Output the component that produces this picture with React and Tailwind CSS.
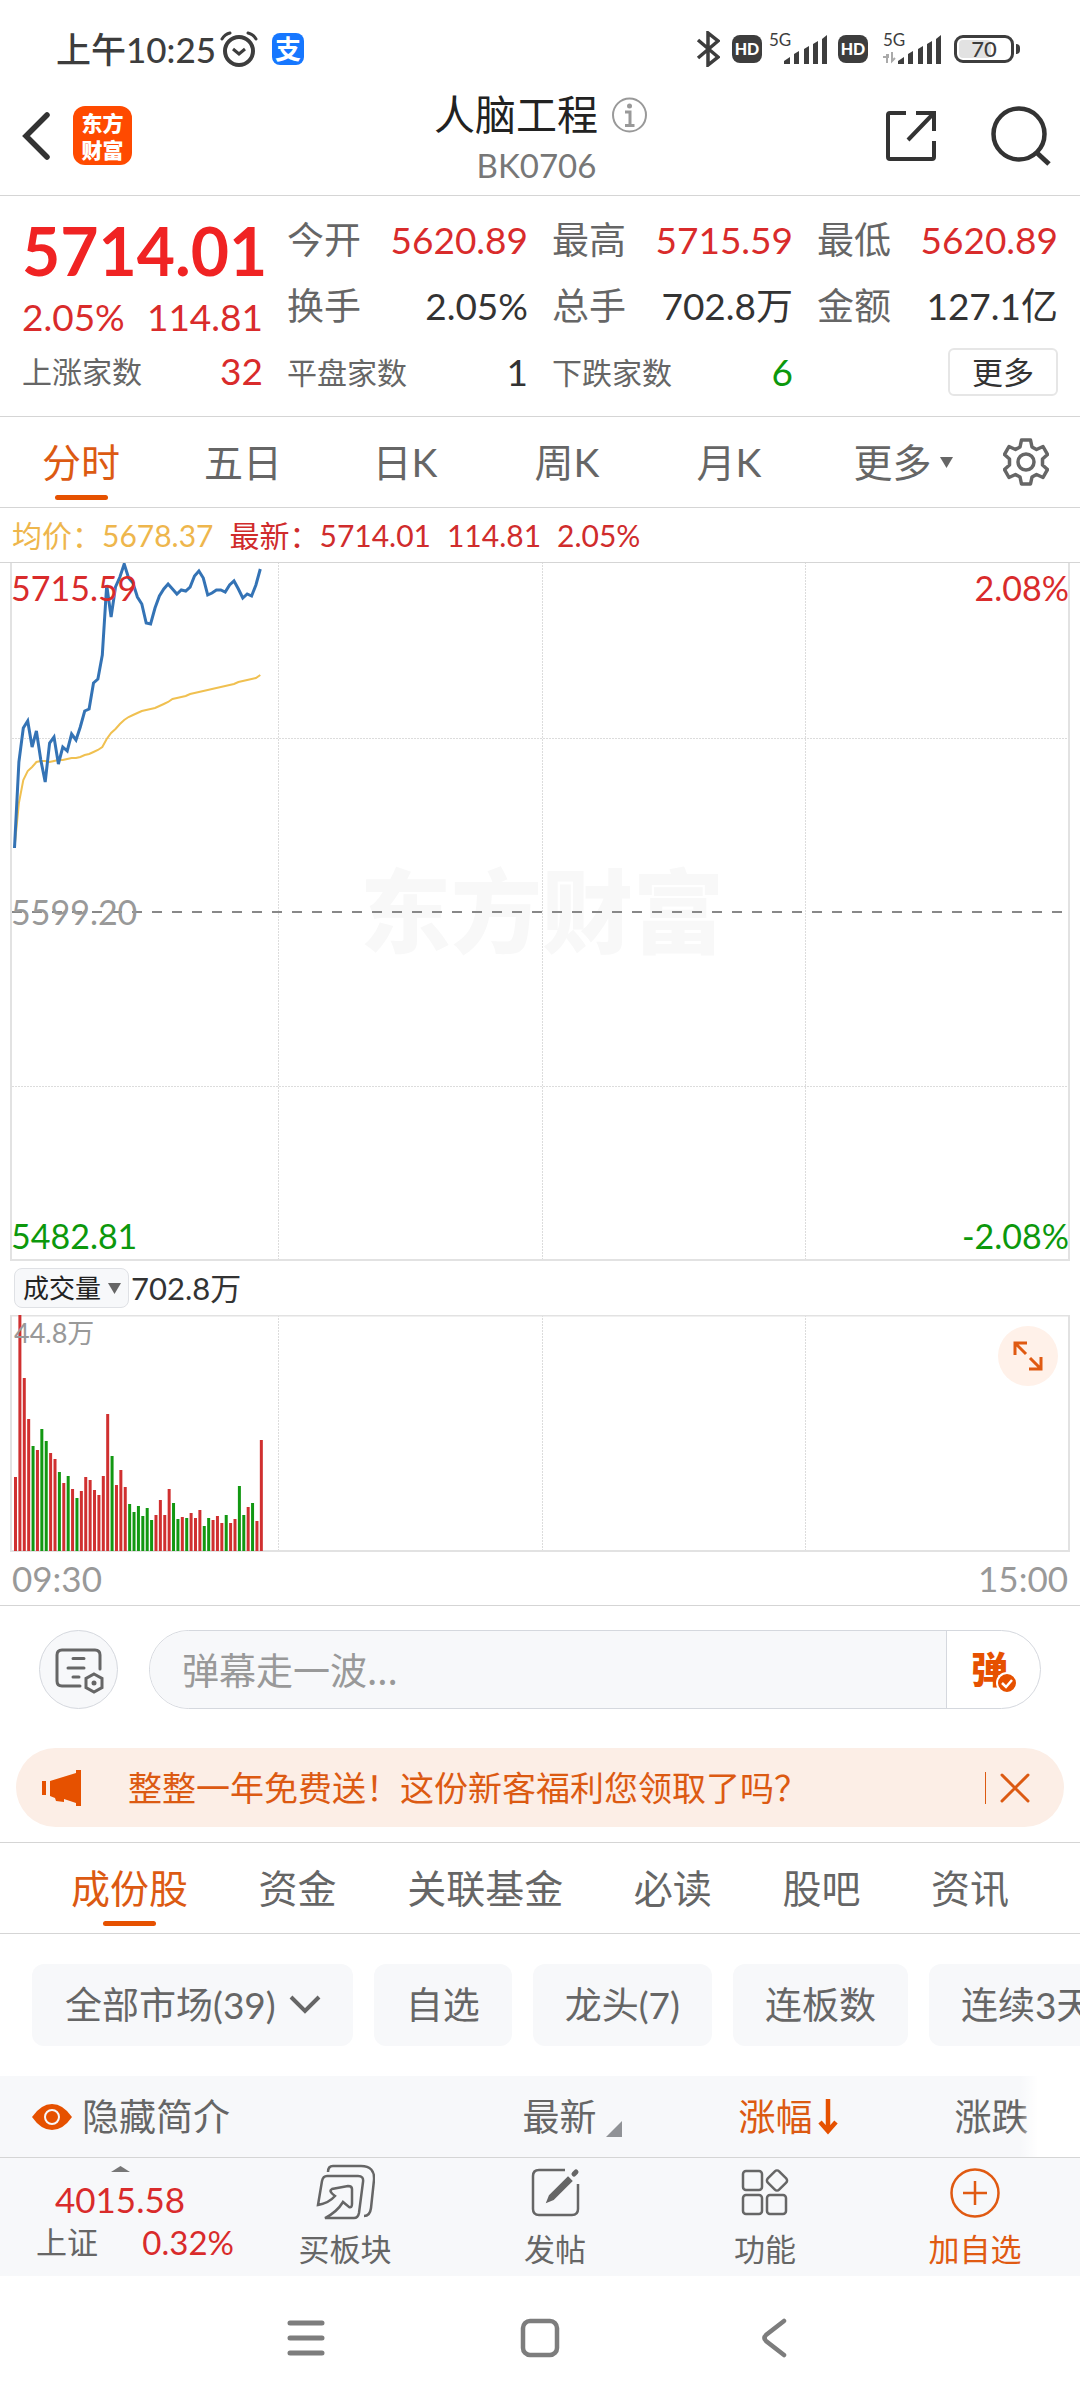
import { useState } from 'react';
import clsx from 'clsx';

const STEP = 4.39;

const prices = [
  286, 200, 166, 159, 185, 169, 198, 220, 181, 175, 202, 185, 189, 172, 178, 165, 149, 147, 121,
  117, 93, 23, 55, 25, 15, 2, 16, 21, 35, 42, 61, 62, 46, 34, 27, 22, 27, 32, 28, 29, 25, 14, 9,
  16, 33, 31, 28, 28, 30, 23, 19, 27, 36, 32, 34, 23, 7,
];

const averages = [
  286, 241, 218, 209, 205, 200, 199, 199, 200, 199, 198, 198, 197, 196, 196, 195, 193, 192, 190,
  188, 185, 177, 171, 167, 162, 158, 155, 153, 151, 149, 148, 147, 146, 144, 142, 140, 137, 136,
  135, 134, 132, 131, 130, 129, 128, 127, 126, 125, 124, 123, 122, 120, 119, 118, 117, 116, 113,
];

const volumes = [
  74, 236, 173, 132, 105, 101, 122, 110, 98, 92, 79, 68, 75, 62, 53, 60, 74, 71, 61, 56, 75, 137,
  95, 66, 81, 64, 47, 39, 45, 35, 43, 31, 36, 51, 36, 62, 48, 32, 34, 33, 38, 33, 41, 25, 33, 31,
  35, 28, 36, 28, 32, 65, 36, 44, 48, 30, 111,
];

// minutes that closed lower than the one before
const falling = [4, 6, 7, 10, 12, 14, 22, 26, 27, 28, 29, 30, 31, 36, 37, 39, 43, 44, 48, 51, 52, 54];

const quoteColumns = [
  [
    { label: '今开', value: '5620.89', color: 'text-[#d92b2b]' },
    { label: '换手', value: '2.05%', color: 'text-[#333]' },
    { label: '平盘家数', value: '1', color: 'text-[#333]', small: true },
  ],
  [
    { label: '最高', value: '5715.59', color: 'text-[#d92b2b]' },
    { label: '总手', value: '702.8万', color: 'text-[#333]' },
    { label: '下跌家数', value: '6', color: 'text-[#0c980c]', small: true },
  ],
  [
    { label: '最低', value: '5620.89', color: 'text-[#d92b2b]' },
    { label: '金额', value: '127.1亿', color: 'text-[#333]' },
  ],
];

const toPoints = (list) => list.map((y, i) => `${(4.5 + i * STEP).toFixed(1)},${y}`).join(' ');

const Signal = ({ data }) => (
  <svg width="60" height="42" viewBox="0 -4 60 42" className="text-[#3d3d3d]">
    <text x="1" y="14" fontSize="17" fontFamily="Lato" fill="currentColor">5G</text>
    {data && <path d="M1 25h5v-3M5 22v9M10 20v9l3-3" fill="none" stroke="#aaa" strokeWidth="2" />}
    <path
      d="M16 32v-3l6-4v7zM26 32V22l5-3v13zM36 32V17l5-3v18zM45 32V12l5-3v23zM54 32V7l5-4v29z"
      fill="currentColor"
    />
  </svg>
);

const HdBadge = () => (
  <span className="flex h-7 w-[30px] items-center justify-center rounded-lg bg-[#3d3d3d] text-[16px] leading-none font-black text-white">
    HD
  </span>
);

const StatusBar = () => (
  <div className="flex h-[76px] items-center justify-between pt-[22px] pr-[60px] pl-14 text-[#3d3d3d]">
    <div className="flex items-center">
      <span className="text-[35px] leading-10 font-medium">上午10:25</span>
      <svg width="38" height="38" viewBox="0 0 38 38" fill="none" stroke="currentColor" strokeWidth="4" className="ml-1">
        <circle cx="19" cy="21" r="14" />
        <path d="M13 19l6 5 6-5" strokeWidth="3" />
        <path d="M2 9q3-5 8-6M36 9q-3-5-8-6" strokeLinecap="round" strokeWidth="3" />
      </svg>
      <span className="ml-[14px] flex size-8 items-center justify-center rounded-lg bg-[#1677ff] text-[26px] leading-none font-bold text-white">
        支
      </span>
    </div>
    <div className="flex items-center">
      <svg width="24" height="36" viewBox="0 0 24 36" fill="none" stroke="currentColor" strokeWidth="3.5" className="mr-3">
        <path d="M2 9l20 17-10 8V2l10 8L2 27" />
      </svg>
      <HdBadge />
      <div className="mr-[10px] ml-[6px]"><Signal /></div>
      <HdBadge />
      <div className="mr-3 ml-[14px]"><Signal data /></div>
      <div className="relative flex h-7 w-[60px] items-center justify-center rounded-[9px] border-[3px] border-[#3d3d3d]">
        <span className="absolute inset-y-[2px] left-[2px] w-8 rounded-[4px] bg-[#e2e2e2]" />
        <span className="relative text-[22px] leading-none font-medium">70</span>
      </div>
      <span className="ml-[2px] h-[10px] w-1 rounded-r bg-[#3d3d3d]" />
    </div>
  </div>
);

const Header = () => (
  <header className="flex h-[120px] items-center border-b border-[#d5d5d5] pr-[29px] pl-[22px]">
    <div className="flex flex-1 items-center gap-[23px]">
      <button aria-label="返回">
        <svg width="28" height="48" viewBox="0 0 28 48" fill="none" stroke="#333" strokeWidth="5.5" strokeLinecap="round">
          <path d="M25 3L4 24l21 21" />
        </svg>
      </button>
      <a
        href="#home"
        className="flex h-[59px] w-[59px] flex-col items-center justify-center rounded-xl bg-[#ff4a00] font-['Noto_Sans_CJK_SC',sans-serif] text-[21px] leading-[27px] font-black text-white"
      >
        <span>东方</span>
        <span>财富</span>
      </a>
    </div>
    <div className="flex flex-col items-center pt-2">
      <h1 className="flex items-center gap-[14px] pl-2 text-[41px] leading-[50px] text-[#222]">
        人脑工程
        <svg width="35" height="36" viewBox="0 0 35 36" fill="none" stroke="#999" strokeWidth="2">
          <circle cx="17.5" cy="18" r="16.5" />
          <circle cx="17.5" cy="9" r="2.5" fill="#999" stroke="none" />
          <path d="M13 15h5v13M13 28.500h9.500" strokeWidth="3" />
        </svg>
      </h1>
      <p className="text-[33px] leading-[50px] text-[#777]">BK0706</p>
    </div>
    <div className="flex flex-1 items-center justify-end gap-[54px] text-[#333]">
      <button aria-label="分享">
        <svg width="52" height="52" viewBox="0 0 52 52" fill="none" stroke="currentColor" strokeWidth="4">
          <path d="M21 3H5q-2 0-2 2v42q0 2 2 2h42q2 0 2-2V31M31 3h18v18M48 4L23 30" />
        </svg>
      </button>
      <button aria-label="搜索">
        <svg width="60" height="60" viewBox="0 0 60 60" fill="none" stroke="currentColor" strokeWidth="4.500">
          <circle cx="28" cy="28" r="25.500" />
          <path d="M45 46l13 12" strokeWidth="5" />
        </svg>
      </button>
    </div>
  </header>
);

const QuotePanel = () => (
  <section className="grid grid-cols-4 gap-x-6 border-b border-[#d5d5d5] px-[22px] pb-[11px]">
    <div className="pt-[22px] text-[#d92b2b]">
      <p className="text-[66px] leading-[66px] font-bold text-[#f02323]">5714.01</p>
      <p className="flex justify-between text-[37px] leading-[66px]">
        <span>2.05%</span>
        <span>114.81</span>
      </p>
      <p className="flex items-center justify-between leading-[42px]">
        <span className="text-[30px] text-[#666]">上涨家数</span>
        <span className="text-[37px]">32</span>
      </p>
    </div>
    {quoteColumns.map((rows) => (
      <div key={rows[0].label} className="pt-[11px]">
        {rows.map((row) => (
          <p key={row.label} className="flex items-center justify-between leading-[66px] whitespace-nowrap">
            <span className={clsx('text-[#666]', row.small ? 'text-[30px]' : 'text-[37px]')}>{row.label}</span>
            <span className={clsx('text-[37px]', row.color)}>{row.value}</span>
          </p>
        ))}
        {rows.length === 2 && (
          <div className="flex h-[66px] items-center justify-end">
            <button className="rounded-md border-2 border-[#e6e6e6] px-[22px] text-[31px] leading-[44px] text-[#333]">更多</button>
          </div>
        )}
      </div>
    ))}
  </section>
);

const PeriodTabs = () => {
  const [active, setActive] = useState('分时');
  return (
    <nav className="flex border-b border-[#d5d5d5]">
      <div className="grid flex-1 grid-cols-6">
        {['分时', '五日', '日K', '周K', '月K', '更多'].map((tab) => (
          <button
            key={tab}
            onClick={() => setActive(tab)}
            className={clsx(
              'relative flex h-[90px] items-center justify-center gap-2 text-[39px] leading-[48px]',
              active === tab ? 'text-[#dc5a12]' : 'text-[#666]',
              tab === '更多' && 'pl-6',
            )}
          >
            {tab}
            {tab === '更多' && (
              <svg width="13" height="11" viewBox="0 0 13 11" fill="currentColor"><path d="M0 0h13L6.500 11z" /></svg>
            )}
            {active === tab && <span className="absolute bottom-[7px] h-[5px] w-[53px] rounded-full bg-[#e65100]" />}
          </button>
        ))}
      </div>
      <button aria-label="设置" className="flex w-[108px] items-center justify-center text-[#666]">
        <svg width="46" height="48" viewBox="0 0 46 48" fill="none" stroke="currentColor" strokeWidth="3.500" strokeLinejoin="round">
          <path d="M18.500 2h9l1.500 7 4.500 2.500 6.500-3 4.500 8-5 4.500v6l5 4.500-4.500 8-6.500-3-4.500 2.500-1.500 7h-9l-1.500-7-4.500-2.500-6.500 3-4.500-8 5-4.500v-6l-5-4.500 4.500-8 6.500 3 4.500-2.500z" />
          <circle cx="23" cy="24" r="8" />
        </svg>
      </button>
    </nav>
  );
};

const PriceChart = () => (
  <div className="relative mx-[10px]">
    <svg viewBox="0 1 1060 698" className="block w-full">
      <text x="532" y="384" textAnchor="middle" fontSize="91" fontWeight="900" fontFamily="Noto Sans CJK SC" fill="#f8f8f8">
        东方财富
      </text>
      <g stroke="#dcdcdc" strokeDasharray="2 1">
        <path d="M268.500 0v698M532.500 0v698M795.500 0v698M2 176.500h1056M2 524.500h1056" />
      </g>
      <path d="M1 0v698h1058V0" fill="none" stroke="#e2e2e2" strokeWidth="2" />
      <path d="M2 350h1056" stroke="#888" strokeWidth="2" strokeDasharray="10 10" />
      <polyline points={toPoints(averages)} fill="none" stroke="#f0c050" strokeWidth="2" />
      <polyline points={toPoints(prices)} fill="none" stroke="#3473b5" strokeWidth="3" />
    </svg>
    <div className="absolute inset-0 flex flex-col justify-between px-[1px] text-[34px] leading-[50px]">
      <p className="flex justify-between text-[#d92b2b]"><span>5715.59</span><span>2.08%</span></p>
      <p className="text-[#999]">5599.20</p>
      <p className="flex justify-between text-[#0c980c]"><span>5482.81</span><span>-2.08%</span></p>
    </div>
  </div>
);

const VolumeChart = () => (
  <div className="relative mx-[10px]">
    <svg viewBox="0 0 1060 237" className="block w-full">
      <g stroke="#dcdcdc" strokeDasharray="2 1">
        <path d="M268.500 0v236M532.500 0v236M795.500 0v236" />
      </g>
      <path d="M1 .5h1058V236H1z" fill="none" stroke="#e2e2e2" strokeWidth="2" />
      {volumes.map((v, i) => (
        <rect key={i} x={4 + i * STEP} y={236 - v} width="3" height={v} fill={falling.includes(i) ? '#129812' : '#d03030'} />
      ))}
    </svg>
    <span className="absolute top-0 left-1 text-[27px] leading-9 text-[#999]">44.8万</span>
    <button aria-label="全屏" className="absolute top-[11px] right-3 flex size-[60px] items-center justify-center rounded-full bg-[#fff1e9]">
      <svg width="30" height="30" viewBox="0 0 30 30" fill="none" stroke="#e05a12" strokeWidth="3">
        <path d="M2 14V2h12M2 2l11 11M28 16v12H16M28 28L17 17" />
      </svg>
    </button>
  </div>
);

const Minutes = () => (
  <section className="border-b border-[#d5d5d5]">
    <p className="flex h-[55px] items-center gap-4 border-b border-[#d5d5d5] px-3 text-[30px] text-[#d02c2c]">
      <span className="text-[#eeb64c]">均价：5678.37</span>
      <span>最新：5714.01</span>
      <span>114.81</span>
      <span>2.05%</span>
    </p>
    <PriceChart />
    <div className="flex h-[54px] items-center gap-[2px] pl-[14px]">
      <div className="relative flex items-center">
        <select
          aria-label="指标"
          className="field-sizing-content h-10 appearance-none rounded-lg border border-[#dfe1e5] bg-[#f7f8fa] pr-[27px] pl-2 text-[26px] text-[#222]"
        >
          <option>成交量</option>
        </select>
        <svg width="13" height="11" viewBox="0 0 13 11" fill="#666" className="pointer-events-none absolute right-2">
          <path d="M0 0h13L6.500 11z" />
        </svg>
      </div>
      <span className="text-[31px] leading-10 text-[#333]">702.8万</span>
    </div>
    <VolumeChart />
    <div className="flex h-[53px] items-center justify-between px-3 text-[35px] text-[#999]">
      <span>09:30</span>
      <span>15:00</span>
    </div>
  </section>
);

const Barrage = () => (
  <section className="border-b border-[#d5d5d5] pt-6 pb-[15px]">
    <div className="flex gap-[31px] px-[39px]">
      <button aria-label="弹幕设置" className="flex size-[79px] items-center justify-center rounded-full border border-[#d5d8de] bg-[#f7f8fa]">
        <svg width="50" height="48" viewBox="0 0 50 48" fill="none" stroke="#666" strokeWidth="3" strokeLinecap="round">
          <path d="M46 23V9q0-5-5-5H8Q3 4 3 9v26q0 5 5 5h18" />
          <path d="M19 12.500h11M14 22h16M19 31h6" />
          <path d="M40 28l8 4.500v9L40 46l-8-4.500v-9z" />
          <circle cx="40" cy="37" r="2.500" fill="#666" stroke="none" />
        </svg>
      </button>
      <div className="flex h-[79px] flex-1 overflow-hidden rounded-full border border-[#d5d8de]">
        <input
          aria-label="弹幕"
          placeholder="弹幕走一波..."
          className="min-w-0 flex-1 bg-[#f7f8fa] px-8 font-['Noto_Sans_CJK_SC',sans-serif] text-[37px] placeholder:text-[#999]"
        />
        <button aria-label="弹幕开关" className="relative w-[94px] border-l border-[#d5d8de] pr-2 text-[37px] font-black text-[#e65100]">
          弹
          <svg width="22" height="22" viewBox="0 0 22 22" className="absolute right-[22px] bottom-[14px]">
            <circle cx="11" cy="11" r="10" fill="#e65100" stroke="#fff" strokeWidth="2" />
            <path d="M6 11l4 4 6-7" fill="none" stroke="#fff" strokeWidth="2.500" />
          </svg>
        </button>
      </div>
    </div>
    <div className="mx-4 mt-[39px] flex h-[79px] items-center rounded-full bg-[#fceee6] pr-[34px] pl-[26px] text-[#dc5a12]">
      <svg width="40" height="36" viewBox="0 0 40 36" fill="#e65100">
        <path d="M0 11h4v14H0zM8 11L34 3V0h5v36h-5v-3l-12-4v3l-8-1-1-3-5-2z" />
      </svg>
      <p className="ml-[46px] flex-1 text-[34px] leading-[44px]">整整一年免费送！这份新客福利您领取了吗？</p>
      <span className="mr-[14px] h-8 w-px bg-[#dc5a12]" />
      <button aria-label="关闭">
        <svg width="30" height="30" viewBox="0 0 30 30" fill="none" stroke="currentColor" strokeWidth="3" strokeLinecap="round">
          <path d="M2 2l26 26M28 2L2 28" />
        </svg>
      </button>
    </div>
  </section>
);

const DetailTabs = () => {
  const [active, setActive] = useState('成份股');
  return (
    <nav className="flex justify-between border-b border-[#d5d5d5] px-[71px]">
      {['成份股', '资金', '关联基金', '必读', '股吧', '资讯'].map((tab) => (
        <button
          key={tab}
          onClick={() => setActive(tab)}
          className={clsx(
            'relative flex h-[90px] items-center justify-center text-[39px] leading-[48px]',
            active === tab ? 'text-[#dc5a12]' : 'text-[#666]',
          )}
        >
          {tab}
          {active === tab && <span className="absolute bottom-[7px] h-[5px] w-[53px] rounded-full bg-[#e65100]" />}
        </button>
      ))}
    </nav>
  );
};

const Filters = () => (
  <div className="flex gap-[21px] overflow-hidden py-[30px] pl-8 text-[37px] whitespace-nowrap text-[#666]">
    <div className="relative flex shrink-0 items-center">
      <select aria-label="市场" className="field-sizing-content h-[82px] appearance-none rounded-xl bg-[#f7f8fa] pr-[77px] pl-[33px]">
        <option>全部市场(39)</option>
      </select>
      <svg width="32" height="20" viewBox="0 0 32 20" fill="none" stroke="currentColor" strokeWidth="4" className="pointer-events-none absolute right-8">
        <path d="M2 2l14 14L30 2" />
      </svg>
    </div>
    {['自选', '龙头(7)', '连板数', '连续3天上涨'].map((name) => (
      <button key={name} className="h-[82px] shrink-0 rounded-xl bg-[#f7f8fa] px-8">{name}</button>
    ))}
  </div>
);

const SortMark = () => (
  <svg width="16" height="16" viewBox="0 0 16 16" fill="#909296" className="mt-6"><path d="M16 0v16H0z" /></svg>
);

const StockTable = () => (
  <div className="relative border-b border-[#d5d5d5]">
    <table className="w-full table-fixed bg-[#f7f8fa] text-left text-[37px] text-[#666]">
      <thead>
        <tr className="h-[81px]">
          <th className="w-[48%] p-0 pl-8 font-normal">
            <button className="flex items-center gap-[10px]">
              <svg width="40" height="26" viewBox="0 0 40 26">
                <path d="M0 13Q9 0 20 0t20 13Q31 26 20 26T0 13z" fill="#e65100" />
                <circle cx="20" cy="13" r="7" fill="#e65100" stroke="#f7f8fa" strokeWidth="2" />
              </svg>
              隐藏简介
            </button>
          </th>
          <th className="w-[20%] p-0 pl-1 font-normal">
            <button className="flex items-center gap-[10px]">最新<SortMark /></button>
          </th>
          <th className="w-[20%] p-0 pl-1 font-normal text-[#dc5a12]">
            <button className="flex items-center gap-[6px]">
              涨幅
              <svg width="20" height="36" viewBox="0 0 20 36" fill="none" stroke="#e65100" strokeWidth="4.500">
                <path d="M10 0v32M2 23l8 9 8-9" />
              </svg>
            </button>
          </th>
          <th className="p-0 pl-1 font-normal"><button>涨跌</button></th>
        </tr>
      </thead>
    </table>
    <div className="pointer-events-none absolute inset-y-0 right-0 w-[60px] bg-linear-to-r from-transparent to-white to-30%" />
  </div>
);

const actions = [
  {
    name: '买板块',
    icon: (
      <path d="M13 8q0-6 5-6h28q14 0 13 14l-3 28q-1 8-7 8M3 41L7 17q1-5 5-5h31q6 0 5 6l-4 31q-1 5-5 5H10Q22 48 28 38l6 5q3 1 3-3V25q0-3-4-3l-16 3q-4 2 3 7Q14 39 3 41z" />
    ),
  },
  {
    name: '发帖',
    icon: (
      <>
        <path d="M40 6H14q-6 0-6 6v33q0 6 6 6h33q6 0 6-6V20" />
        <path d="M43 14l3 3-18 18-5 2 2-5z" fill="currentColor" />
        <path d="M49 10l2-2" strokeWidth="5" strokeLinecap="round" />
      </>
    ),
  },
  {
    name: '功能',
    icon: (
      <>
        <rect x="8" y="7" width="19" height="19" rx="3" />
        <rect x="8" y="31" width="19" height="19" rx="3" />
        <rect x="32" y="31" width="19" height="19" rx="3" />
        <rect x="34" y="8.500" width="16" height="16" rx="3" transform="rotate(45 42 16.500)" />
      </>
    ),
  },
  {
    name: '加自选',
    color: 'text-[#e05a12]',
    icon: (
      <>
        <circle cx="30" cy="29" r="23.500" />
        <path d="M30 17v24M18 29h24" />
      </>
    ),
  },
];

const ActionBar = () => (
  <footer className="flex h-[118px] bg-[#f7f8fa] text-[#666]">
    <a href="#index" className="flex flex-1 flex-col items-center pt-2">
      <svg width="19" height="6" viewBox="0 0 19 6" fill="#777"><path d="M0 6L9.500 0 19 6z" /></svg>
      <span className="mt-1 text-[35px] leading-[46px] text-[#d92b2b]">4015.58</span>
      <span className="flex w-full justify-between pr-[6px] pl-9 leading-10">
        <span className="text-[31px]">上证</span>
        <span className="text-[33px] text-[#d92b2b]">0.32%</span>
      </span>
    </a>
    <div className="grid w-7/9 grid-cols-4">
      {actions.map((item) => (
        <button key={item.name} className={clsx('flex flex-col items-center pt-[6px] text-[31px] leading-[50px]', item.color)}>
          <svg width="60" height="60" viewBox="0 0 60 60" fill="none" stroke="currentColor" strokeWidth="2.500">
            {item.icon}
          </svg>
          {item.name}
        </button>
      ))}
    </div>
  </footer>
);

const SystemNav = () => (
  <div className="flex h-[124px] items-center justify-center gap-[194px] text-[#7d7d7d]">
    <button aria-label="最近任务">
      <svg width="40" height="40" viewBox="0 0 40 40" stroke="currentColor" strokeWidth="5" strokeLinecap="round">
        <path d="M4 5h32M4 20h32M4 35h32" />
      </svg>
    </button>
    <button aria-label="主屏幕">
      <svg width="40" height="40" viewBox="0 0 40 40" fill="none" stroke="currentColor" strokeWidth="4.500">
        <rect x="3" y="3" width="34" height="34" rx="7" />
      </svg>
    </button>
    <button aria-label="后退">
      <svg width="40" height="40" viewBox="0 0 40 40" fill="none" stroke="currentColor" strokeWidth="4.500" strokeLinecap="round">
        <path d="M30 3L12 17q-3 3 0 6l18 14" />
      </svg>
    </button>
  </div>
);

const App = () => (
  <div className="min-h-screen bg-white font-['Lato','Noto_Sans_CJK_SC',sans-serif]">
    <StatusBar />
    <Header />
    <main>
      <QuotePanel />
      <PeriodTabs />
      <Minutes />
      <Barrage />
      <DetailTabs />
      <Filters />
      <StockTable />
    </main>
    <ActionBar />
    <SystemNav />
  </div>
);

export default App;
